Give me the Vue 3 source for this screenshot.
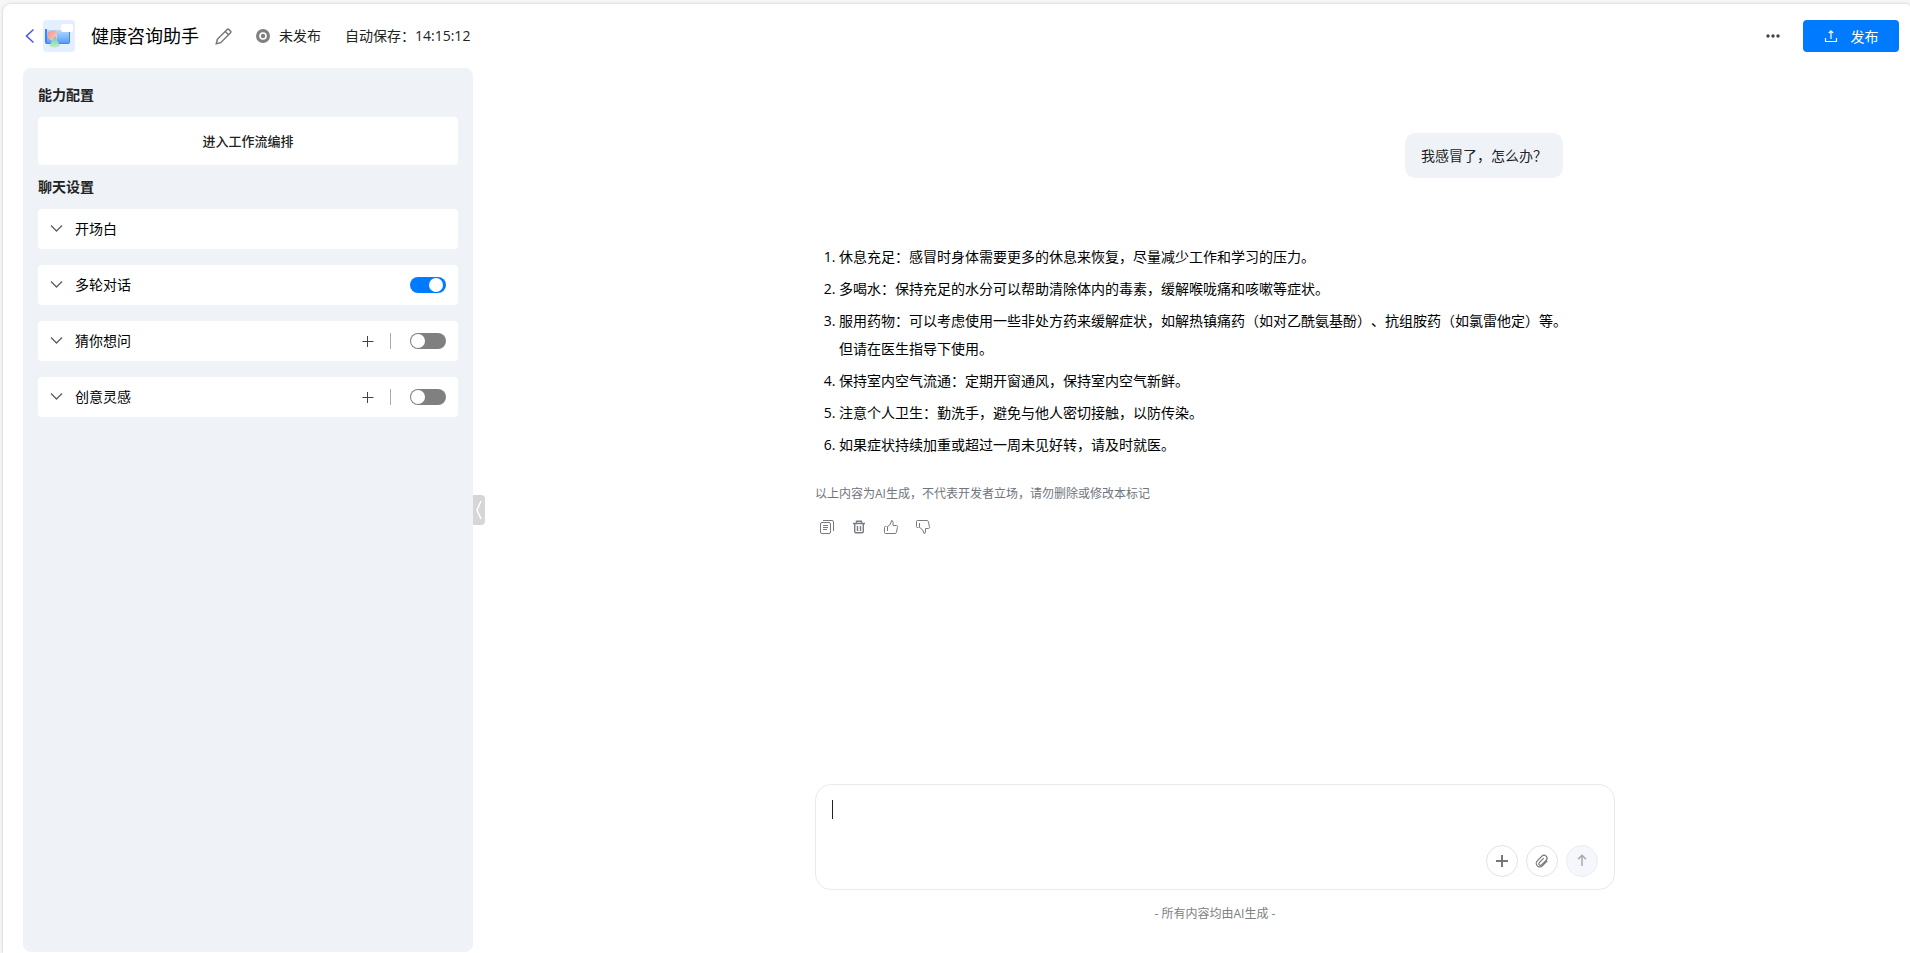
<script setup>
import { ref } from 'vue'

const title = '健康咨询助手'
const savedAt = '14:15:12'
const message = ref('')
const collapsed = ref(false)
const settings = ref([
  { id: 'opening', label: '开场白', hasSwitch: false, canAdd: false, enabled: false },
  { id: 'multi', label: '多轮对话', hasSwitch: true, canAdd: false, enabled: true },
  { id: 'guess', label: '猜你想问', hasSwitch: true, canAdd: true, enabled: false },
  { id: 'idea', label: '创意灵感', hasSwitch: true, canAdd: true, enabled: false },
])
const answer = [
  '休息充足：感冒时身体需要更多的休息来恢复，尽量减少工作和学习的压力。',
  '多喝水：保持充足的水分可以帮助清除体内的毒素，缓解喉咙痛和咳嗽等症状。',
  '服用药物：可以考虑使用一些非处方药来缓解症状，如解热镇痛药（如对乙酰氨基酚）、抗组胺药（如氯雷他定）等。但请在医生指导下使用。',
  '保持室内空气流通：定期开窗通风，保持室内空气新鲜。',
  '注意个人卫生：勤洗手，避免与他人密切接触，以防传染。',
  '如果症状持续加重或超过一周未见好转，请及时就医。',
]
</script>

<template>
  <div class="page">
    <header class="header">
      <a class="back" href="#" aria-label="返回">
        <svg width="10" height="16" viewBox="0 0 10 16"><path d="M8.5 1.5 1.5 8l7 6.500" /></svg>
      </a>
      <svg class="logo" width="32" height="32" viewBox="0 0 32 32">
        <defs>
          <linearGradient id="screen" x1="0" y1="0" x2="0" y2="1">
            <stop offset="0" stop-color="#b5dbff" />
            <stop offset="1" stop-color="#5a9dfb" />
          </linearGradient>
          <linearGradient id="ball" x1="0" y1="0" x2="1" y2="1">
            <stop offset="0" stop-color="#fb8f86" />
            <stop offset="1" stop-color="#f3d3cf" />
          </linearGradient>
          <linearGradient id="cone" x1="0" y1="0" x2="0" y2="1">
            <stop offset="0" stop-color="#5fcfae" />
            <stop offset="1" stop-color="#c5ebc4" />
          </linearGradient>
        </defs>
        <rect width="32" height="32" rx="4" fill="#e3efff" />
        <path d="M2 9h2v13h22V12h1v10a2 2 0 0 1-2 2H4a2 2 0 0 1-2-2z" fill="#3f86f5" />
        <rect x="4" y="10" width="22" height="13" rx="1" fill="url(#screen)" />
        <path d="M5 12l7-2 2 3v6l-5 2-4-3z" fill="url(#ball)" />
        <path d="M12 16l5 10q-5 3-11 0z" fill="url(#cone)" />
        <rect x="18" y="4" width="12" height="8" rx="2" fill="#fff" />
      </svg>
      <h1 class="title">{{ title }}</h1>
      <button class="icon-btn edit" type="button" aria-label="编辑">
        <svg width="17" height="17" viewBox="0 0 16 16">
          <path d="M1.200 14.800l1-4.200L11.200 1.600a1.500 1.500 0 0 1 2.100 0l1.100 1.100a1.500 1.500 0 0 1 0 2.100L5.400 13.800zM9.700 3.300l3 3" />
        </svg>
      </button>
      <div class="status">
        <svg width="14" height="14" viewBox="0 0 14 14">
          <circle cx="7" cy="7" r="7" fill="#808080" />
          <circle cx="7" cy="7" r="3" fill="none" stroke="#fff" stroke-width="1.600" />
        </svg>
        <span>未发布</span>
      </div>
      <div class="saved">自动保存：{{ savedAt }}</div>
      <button class="icon-btn more" type="button" aria-label="更多">
        <svg width="16" height="16" viewBox="0 0 16 16">
          <circle cx="3" cy="8" r="1.700" /><circle cx="8" cy="8" r="1.700" /><circle cx="13" cy="8" r="1.700" />
        </svg>
      </button>
      <button class="publish" type="button">
        <svg width="14" height="14" viewBox="0 0 14 14">
          <path d="M1.500 9v3.500h11V9M7 10V2M4.800 4 7 1.800 9.200 4" />
        </svg>
        <span>发布</span>
      </button>
    </header>

    <div class="body">
      <aside v-show="!collapsed" class="panel">
        <h2>能力配置</h2>
        <button class="flow" type="button">进入工作流编排</button>
        <h2>聊天设置</h2>
        <div class="settings">
          <div v-for="item in settings" :key="item.id" class="row">
            <svg class="chevron" width="14" height="14" viewBox="0 0 14 14"><path d="M1 3.500 6.500 9 12 3.500" /></svg>
            <label v-if="item.hasSwitch" class="name" :for="item.id">{{ item.label }}</label>
            <span v-else class="name">{{ item.label }}</span>
            <button v-if="item.canAdd" class="icon-btn add" type="button" aria-label="添加">
              <svg width="12" height="12" viewBox="0 0 12 12"><path d="M0.500 6.500h11M5.500 1v11" /></svg>
            </button>
            <span v-if="item.canAdd" class="divider"></span>
            <input v-if="item.hasSwitch" :id="item.id" v-model="item.enabled" class="switch" type="checkbox">
          </div>
        </div>
      </aside>
      <button class="handle" type="button" aria-label="收起" @click="collapsed = !collapsed">
        <svg width="8" height="20" viewBox="0 0 8 20"><path d="M6 1 2 10l4 9" /></svg>
      </button>

      <main class="main">
        <div class="chat">
          <div class="question">我感冒了，怎么办？</div>
          <ol class="answer">
            <li v-for="line in answer" :key="line">{{ line }}</li>
          </ol>
          <p class="note">以上内容为AI生成，不代表开发者立场，请勿删除或修改本标记</p>
          <div class="actions">
            <button class="icon-btn" type="button" aria-label="复制">
              <svg width="16" height="16" viewBox="0 0 16 16">
                <rect x="1.500" y="3.500" width="10" height="11" rx="1.500" />
                <path d="M4 1.500h9a1.500 1.500 0 0 1 1.500 1.500v9M4 6.500h5M4 8.500h5M4 10.500h4" />
              </svg>
            </button>
            <button class="icon-btn" type="button" aria-label="删除">
              <svg width="16" height="16" viewBox="0 0 16 16">
                <path class="bold" d="M2 4.500h12M5.500 4V2.200h5V4M3.700 5v7.500a1.300 1.300 0 0 0 1.300 1.300h6a1.300 1.300 0 0 0 1.300-1.300V5M6.500 7v5M9.500 7v5" />
              </svg>
            </button>
            <button class="icon-btn" type="button" aria-label="点赞">
              <svg width="16" height="16" viewBox="0 0 16 16">
                <path d="M3.500 7.500H2.500a1 1 0 0 0-1 1v5a1 1 0 0 0 1 1h9.500a1.500 1.500 0 0 0 1.400-1.100l1-5A1.200 1.200 0 0 0 13.200 6.500H10V3.200Q10 1.500 8.500 1.500L7.800 4Q7 6.500 4.500 7.500v4.500" />
              </svg>
            </button>
            <button class="icon-btn" type="button" aria-label="点踩">
              <svg width="16" height="16" viewBox="0 0 16 16">
                <path d="M3.500 8.500H2.500a1 1 0 0 1-1-1v-5a1 1 0 0 1 1-1h9.500a1.500 1.500 0 0 1 1.400 1.100l1 5A1.200 1.200 0 0 1 13.200 9.500H10.500V12.800Q10.500 14.500 9 14.500L8.200 12Q7 9.500 4.500 8.500V4" />
              </svg>
            </button>
          </div>
        </div>

        <div class="composer">
          <textarea v-model="message" aria-label="输入消息"></textarea>
          <span v-if="!message" class="caret"></span>
          <div class="tools">
            <button class="round" type="button" aria-label="新建">
              <svg width="16" height="16" viewBox="0 0 16 16"><path class="thick" d="M2 8h12M8 2v12" /></svg>
            </button>
            <button class="round" type="button" aria-label="附件">
              <svg width="16" height="16" viewBox="0 0 16 16">
                <path d="M13.300 7.800 8.300 12.800a3.500 3.500 0 0 1-5-5L7.900 3.200a2.900 2.900 0 0 1 4.200 4.200L7.600 11.900a1.600 1.600 0 0 1-2.300-2.300L9.700 5.200" />
              </svg>
            </button>
            <button class="round send" type="button" aria-label="发送" disabled>
              <svg width="16" height="16" viewBox="0 0 16 16"><path d="M8 13V2.500M4 6.300 8 2.300l4 4" /></svg>
            </button>
          </div>
        </div>
        <p class="footer">- 所有内容均由AI生成 -</p>
      </main>
    </div>
  </div>
</template>

<style>
body {
  background: #f6f6f6;
}
</style>

<style scoped>
.page {
  box-sizing: border-box;
  display: flex;
  flex-direction: column;
  min-height: calc(100vh - 4px);
  margin: 4px 0 0 3px;
  background: #fff;
  border-radius: 8px 4px 0 0;
  box-shadow: 0 0 3px rgba(0, 0, 0, 0.2);
  color: #222;
  font-family: "Open Sans", "Noto Sans CJK SC", sans-serif;
  font-size: 14px;
  line-height: 20px;
  text-spacing-trim: space-all;
  overflow: hidden;
}
h1, h2, p, ol {
  margin: 0;
}
button {
  padding: 0;
  border: 0;
  font-family: inherit;
  cursor: pointer;
}
svg {
  display: block;
  flex: none;
}
.icon-btn {
  background: none;
}
.header {
  display: flex;
  align-items: center;
  height: 64px;
  padding: 0 11px 0 22px;
}
.back svg {
  fill: none;
  stroke: #5257e6;
  stroke-width: 1.6;
}
.logo {
  margin-left: 8px;
}
.title {
  margin-left: 16px;
  color: #000;
  font-size: 18px;
  font-weight: 400;
  line-height: 24px;
}
.edit {
  margin: 0 24px 0 16px;
  svg {
    fill: none;
    stroke: #777;
    stroke-width: 1.4;
  }
}
.status {
  display: flex;
  align-items: center;
  gap: 9px;
}
.saved {
  margin-left: 24px;
}
.more {
  margin-left: auto;
  margin-right: 22px;
  fill: #444;
}
.publish {
  display: flex;
  align-items: center;
  justify-content: center;
  gap: 13px;
  width: 96px;
  height: 32px;
  border-radius: 4px;
  background: #007bff;
  color: #fff;
  font-size: 14px;
  svg {
    fill: none;
    stroke: #fff;
    stroke-width: 1.2;
  }
}
.body {
  display: flex;
  flex: 1;
  padding: 0 0 1px 20px;
}
.panel {
  box-sizing: border-box;
  flex: none;
  width: 450px;
  padding: 5px 15px;
  border-radius: 8px;
  background: #eff3f8;
  h2 {
    font-size: 14px;
    font-weight: 700;
    line-height: 44px;
  }
}
.flow {
  width: 100%;
  height: 48px;
  padding-bottom: 2px;
  border-radius: 4px;
  background: #fff;
  color: #222;
  font-size: 13px;
  font-weight: 500;
}
.settings {
  display: flex;
  flex-direction: column;
  gap: 16px;
}
.row {
  display: flex;
  align-items: center;
  height: 40px;
  padding: 0 12px;
  border-radius: 4px;
  background: #fff;
}
.chevron {
  fill: none;
  stroke: #666;
  stroke-width: 1.5;
}
.name {
  flex: 1;
  margin-left: 11px;
  color: #000;
}
.add svg {
  fill: none;
  stroke: #444;
  stroke-width: 1;
}
.divider {
  width: 1px;
  height: 16px;
  margin: 0 19px 0 16px;
  background: #aaa;
}
.switch {
  appearance: none;
  width: 36px;
  height: 16px;
  margin: 0;
  padding: 1px;
  box-sizing: border-box;
  border-radius: 8px;
  background: #808080;
  cursor: pointer;
  &::before {
    content: '';
    display: block;
    width: 14px;
    height: 14px;
    border-radius: 50%;
    background: #fff;
  }
  &:checked {
    background: #007bff;
  }
  &:checked::before {
    margin-left: auto;
    margin-right: 2px;
  }
}
.handle {
  display: flex;
  align-items: center;
  justify-content: center;
  flex: none;
  align-self: center;
  width: 12px;
  height: 30px;
  border-radius: 0 4px 4px 0;
  background: #d6d6d6;
  svg {
    fill: none;
    stroke: #fff;
    stroke-width: 1.5;
  }
}
.main {
  display: flex;
  flex-direction: column;
  flex: 1;
  align-items: center;
  padding: 65px 16px 28px 51px;
}
.chat {
  display: flex;
  flex-direction: column;
  flex: 1;
  width: 100%;
  max-width: 800px;
}
.question {
  align-self: flex-end;
  margin-right: 52px;
  padding: 12px 16px;
  border-radius: 10px;
  background: #eff3f8;
  line-height: 21px;
}
.answer {
  display: flex;
  flex-direction: column;
  gap: 4px;
  margin-top: 65px;
  padding: 0 40px 0 24px;
  color: #000;
  line-height: 28px;
}
.note {
  margin-top: 25px;
  color: #70747c;
  font-size: 12px;
}
.actions {
  display: flex;
  gap: 16px;
  margin-top: 15px;
  padding-left: 4px;
  svg {
    fill: none;
    stroke: #777b82;
    stroke-width: 1;
  }
  .bold {
    stroke-width: 1.4;
  }
}
.composer {
  position: relative;
  box-sizing: border-box;
  display: flex;
  flex-direction: column;
  width: 100%;
  max-width: 800px;
  padding: 15px 16px 12px;
  border: 1px solid #eaeaea;
  border-radius: 16px;
}
textarea {
  height: 45px;
  padding: 0;
  border: 0;
  outline: none;
  resize: none;
  font: inherit;
  background: none;
}
.caret {
  position: absolute;
  top: 15px;
  left: 16px;
  width: 1px;
  height: 19px;
  background: #222;
}
.composer:focus-within .caret {
  display: none;
}
.tools {
  display: flex;
  justify-content: flex-end;
  gap: 8px;
}
.round {
  box-sizing: border-box;
  display: flex;
  align-items: center;
  justify-content: center;
  width: 32px;
  height: 32px;
  border: 1px solid #e3e3e3;
  border-radius: 50%;
  background: #fff;
  svg {
    fill: none;
    stroke: #777;
    stroke-width: 1.2;
  }
  .thick {
    stroke-width: 2;
  }
}
.send {
  border-color: #ececf2;
  background: #f5f7fc;
  svg {
    stroke: #aaa;
    stroke-width: 1.5;
  }
}
.footer {
  margin-top: 14px;
  color: #808080;
  font-size: 12px;
}
</style>
